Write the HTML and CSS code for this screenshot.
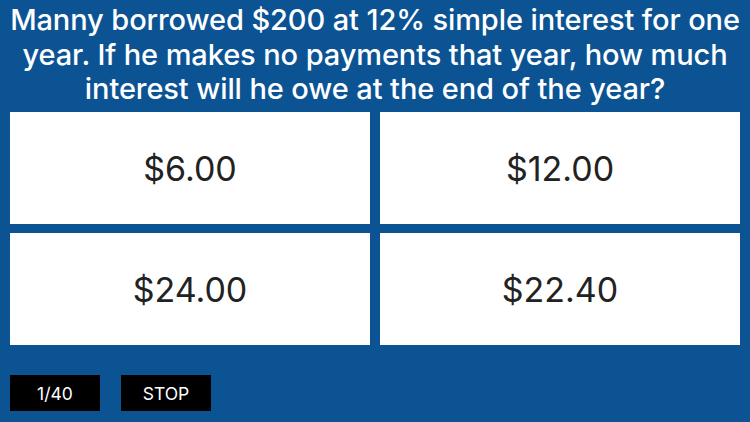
FILE: index.html
```html
<!DOCTYPE html>
<html>
<head>
<meta charset="utf-8">
<link rel="stylesheet" href="styles.css">
</head>
<body>
<div class="page">
  <div class="question">Manny borrowed $200 at 12% simple interest for one year. If he makes no payments that year, how much interest will he owe at the end of the year?</div>
  <div class="answers">
    <div class="answer">$6.00</div>
    <div class="answer">$12.00</div>
    <div class="answer">$24.00</div>
    <div class="answer">$22.40</div>
  </div>
  <div class="controls">
    <div class="btn">1/40</div>
    <div class="btn">STOP</div>
  </div>
</div>
</body>
</html>
```
FILE: styles.css
```css
html, body {
  margin: 0;
  padding: 0;
  background: #0c5394;
}
.page {
  width: 750px;
  height: 422px;
  box-sizing: border-box;
  padding: 3px 10px 0 10px;
  display: flex;
  flex-direction: column;
  font-family: Inter, "Noto Sans", sans-serif;
}
.question {
  color: #ffffff;
  font-size: 29px;
  font-weight: 500;
  line-height: 34.5px;
  text-align: center;
  height: 109px;
  letter-spacing: -0.1px;
}
.answers {
  display: grid;
  grid-template-columns: 360px 360px;
  grid-template-rows: 112px 112px;
  column-gap: 10px;
  row-gap: 9px;
}
.answer {
  background: #ffffff;
  color: #222222;
  font-size: 34px;
  font-weight: 400;
  display: flex;
  align-items: center;
  justify-content: center;
}
.controls {
  display: flex;
  gap: 21px;
  margin-top: 30px;
}
.btn {
  width: 90px;
  height: 36px;
  background: #000000;
  color: #ffffff;
  font-size: 17.5px;
  display: flex;
  align-items: center;
  justify-content: center;
}
```
